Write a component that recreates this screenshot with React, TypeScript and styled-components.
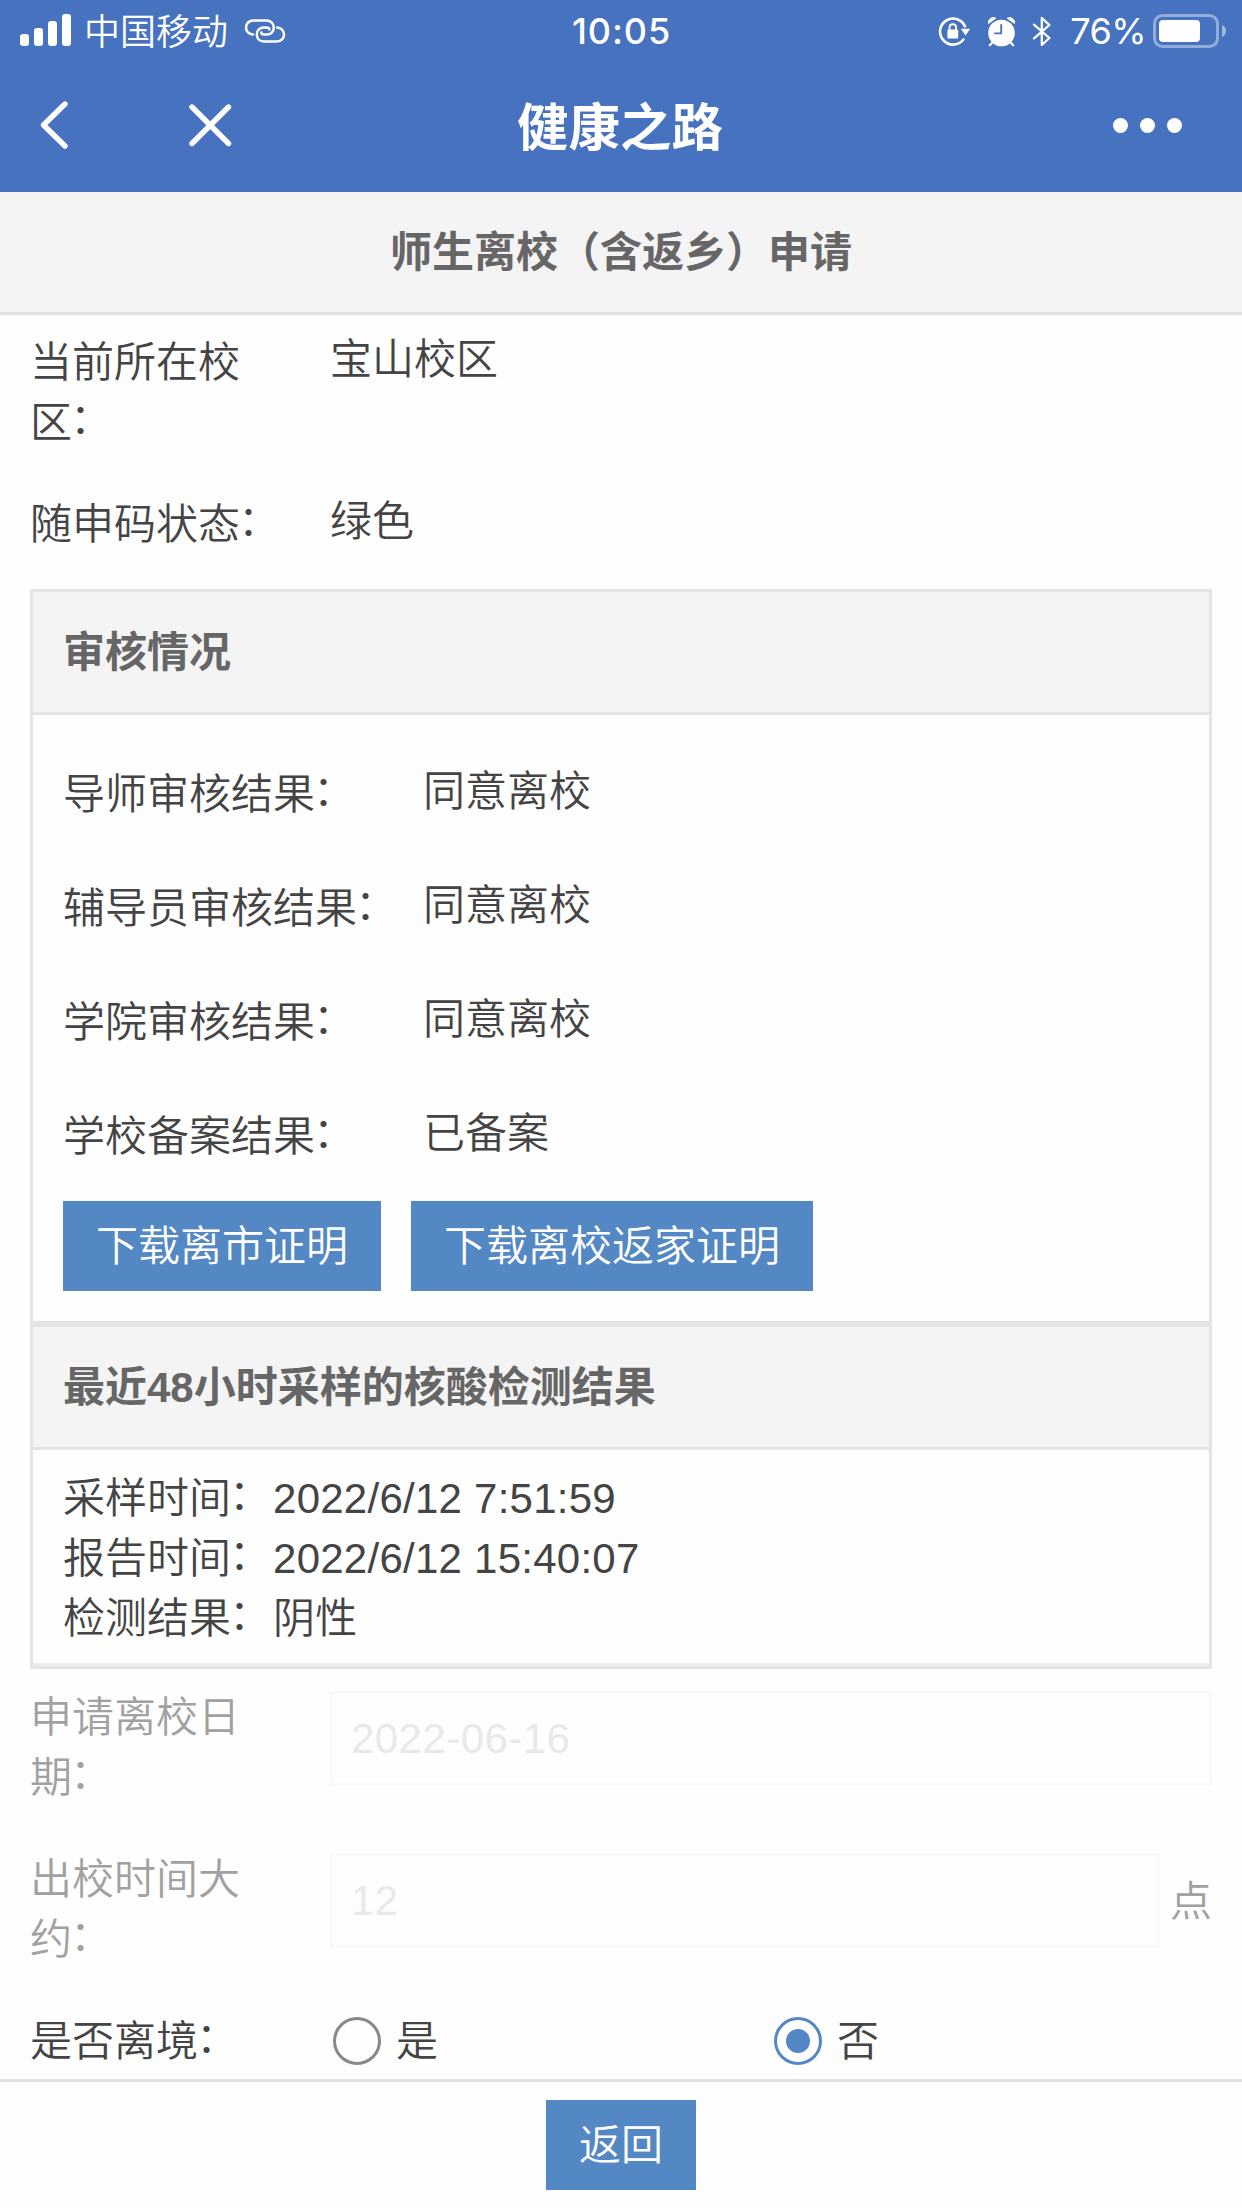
import React from "react";
import styled, { createGlobalStyle } from "styled-components";

const GlobalStyle = createGlobalStyle`
  *, *::before, *::after { box-sizing: border-box; }
  html, body { margin: 0; padding: 0; background: #fff; }
  body {
    font-family: "Liberation Sans", "Noto Sans CJK SC", sans-serif;
    font-size: 42px;
    font-weight: 350;
    line-height: 60px;
    color: #444;
  }
`;

const Screen = styled.div`
  display: flex;
  flex-direction: column;
  width: 1242px;
  height: 2208px;
  overflow: hidden;
  background: #fefefe;
`;

/* ---------- header ---------- */

const Header = styled.header`
  flex: none;
  height: 192px;
  background: #4672bf;
  color: #fff;
`;

const StatusBar = styled.div`
  display: grid;
  grid-template-columns: 1fr auto 1fr;
  align-items: center;
  height: 62px;
  padding: 0 15px 0 20px;
  font-family: Inter, "Noto Sans CJK SC", sans-serif;
  font-size: 36px;
  line-height: 62px;
`;

const StatusGroup = styled.div<{ $end?: boolean }>`
  display: flex;
  align-items: center;
  justify-content: ${(p) => (p.$end ? "flex-end" : "flex-start")};
`;

const Bars = styled.div`
  display: flex;
  align-items: flex-end;
  gap: 5px;
  height: 32px;
  margin: 0 13px 2px 0;
`;

const Bar = styled.span<{ $h: number }>`
  width: 9px;
  height: ${(p) => p.$h}px;
  border-radius: 3px;
  background: #fff;
`;

const Carrier = styled.span`
  margin: -4px 16px 0 0;
  font-family: "Noto Sans CJK SC", sans-serif;
  font-weight: 350;
`;

const Clock = styled.span`
  margin-right: 4px;
  font-weight: 500;
  letter-spacing: 0.9px;
`;

const Percent = styled.span`
  margin: 0 7px 0 18px;
  font-weight: 400;
  letter-spacing: -0.6px;
`;

const NavBar = styled.nav`
  display: grid;
  grid-template-columns: 1fr auto 1fr;
  align-items: center;
  height: 130px;
  padding: 0 60px 4px 36px;
`;

const NavLeft = styled.div`
  display: flex;
  align-items: center;
  gap: 114px;
`;

const NavTitle = styled.h1`
  margin: 5px 0 0 22px;
  font-size: 51.5px;
  line-height: 72px;
  font-weight: 700;
`;

const Dots = styled.div`
  display: flex;
  justify-content: flex-end;
  gap: 12px;
`;

const Dot = styled.span`
  width: 15px;
  height: 15px;
  border-radius: 50%;
  background: #fff;
`;

/* ---------- page ---------- */

const PageTitle = styled.h2`
  flex: none;
  height: 123px;
  margin: 0;
  padding-top: 1px;
  border-bottom: 3px solid #e1e1e1;
  background: #f4f4f4;
  color: #666;
  font-size: 42px;
  font-weight: 700;
  line-height: 120px;
  text-align: center;
`;

const Content = styled.main`
  flex: 1;
  min-height: 0;
  overflow: hidden;
  padding: 15px 30px 0;
`;

const Rows = styled.div<{ $gap: number }>`
  display: flex;
  flex-direction: column;
  gap: ${(p) => p.$gap}px;
`;

const Row = styled.div<{ $col: number }>`
  display: grid;
  grid-template-columns: ${(p) => p.$col}px 1fr;
`;

const LabelBox = styled.div<{ $muted?: boolean; $drop?: boolean }>`
  padding: ${(p) => (p.$drop ? "3px" : "0")} 20px 0 0;
  color: ${(p) => (p.$muted ? "#a1a1a1" : "#444")};
`;

const Colon = styled.span`
  margin: 0 2px 0 -2px;
  line-height: 0;
  vertical-align: 3px;
`;

const Value = styled.div``;

const Card = styled.section`
  margin: 34px 0 19px;
  border: 3px solid #e4e4e4;
`;

const CardTitle = styled.h3`
  height: 123px;
  margin: 0;
  padding: 1px 0 0 30px;
  border-bottom: 3px solid #e4e4e4;
  background: #f4f4f4;
  color: #666;
  font-size: 42px;
  font-weight: 700;
  line-height: 120px;
`;

const CardBody = styled.div`
  padding: 47px 30px 30px;
  border-bottom: 6px solid #e4e4e4;
`;

const Report = styled.div`
  padding: 19px 30px 14px;
  border-bottom: 3px solid #ececec;
`;

const Stamp = styled.span`
  letter-spacing: 0.25px;
`;

const Actions = styled.div`
  display: flex;
  gap: 30px;
  margin: 34px 0 0;
`;

const Button = styled.button`
  height: 90px;
  padding: 1px 33px 0;
  border: 0;
  background: #5488c5;
  color: #fff;
  font: inherit;
  line-height: 89px;
`;

const FieldLine = styled.div`
  display: flex;
  align-items: center;
  gap: 10px;
  height: 95px;
  margin-top: 3px;
`;

const Field = styled.div`
  flex: 1;
  height: 95px;
  padding-left: 18px;
  border: 3px solid #f9f9f9;
  color: #e9e9e9;
  line-height: 90px;
  letter-spacing: 0.45px;
`;

const Unit = styled.span`
  padding-top: 2px;
  color: #a1a1a1;
`;

const Choices = styled.div`
  display: grid;
  grid-template-columns: 1fr 1fr;
`;

const Choice = styled.div`
  display: flex;
  align-items: center;
  gap: 15px;
  padding-left: 3px;
`;

const Radio = styled.span<{ $on?: boolean }>`
  display: flex;
  align-items: center;
  justify-content: center;
  width: 48px;
  height: 48px;
  margin-top: -2px;
  border: 3px solid ${(p) => (p.$on ? "#5488c5" : "#888")};
  border-radius: 50%;

  &::after {
    content: "";
    width: 24px;
    height: 24px;
    border-radius: 50%;
    background: ${(p) => (p.$on ? "#5488c5" : "transparent")};
  }
`;

const Footer = styled.footer`
  flex: none;
  display: flex;
  justify-content: center;
  align-items: flex-start;
  height: 129px;
  padding-top: 18px;
  border-top: 3px solid #e2e2e2;
`;

/* ---------- icons ---------- */

const LinkIcon = () => (
  <svg width="42" height="26" viewBox="0 0 42 26" fill="none" stroke="#fff" strokeWidth="2.5" strokeLinecap="round">
    <path d="M9 16.6 C5 16.2 2 13.2 2 9.6 C2 5.4 5.2 2.6 9.2 2.6 H22.5 C27 2.6 29.8 5.8 29.8 9.6 C29.8 13.6 26.8 16.6 22.8 16.6 H20 C18.4 16.6 17.4 15.8 17.4 14.6" />
    <path d="M33 9.4 C37 9.8 40 12.6 40 16.4 C40 20.4 37 23.4 33 23.4 H20 C15.6 23.4 12.8 20.4 12.8 16.4 C12.8 12.4 15.8 9.4 19.6 9.4 H22.4 C24.2 9.4 25.4 10 25.4 11.4" />
  </svg>
);

const LockRotateIcon = () => (
  <svg width="33" height="31" viewBox="0 0 33 31" fill="none">
    <path d="M27.3 11.2 A13 13 0 1 0 26 22.6" stroke="#fff" strokeWidth="2.6" />
    <path d="M22.8 12.8 H32.2 L27.6 19.6 Z" fill="#fff" />
    <rect x="9.4" y="13.4" width="10.8" height="9.2" rx="1.2" fill="#fff" />
    <path d="M11.5 14 V11.4 C11.5 7.2 18.1 7.2 18.1 11.4 V14" stroke="#fff" strokeWidth="1.8" />
  </svg>
);

const AlarmIcon = () => (
  <svg width="29" height="31" viewBox="0 0 29 31" fill="none">
    <circle cx="14.5" cy="17" r="13.3" fill="#fff" />
    <path d="M1.6 7.4 C0.6 3.6 5 0.2 8.8 2.2 Z M27.4 7.4 C28.4 3.6 24 0.2 20.2 2.2 Z" fill="#fff" stroke="#fff" strokeLinejoin="round" />
    <path d="M5.8 26 L2.8 29.2 M23.2 26 L26.2 29.2" stroke="#fff" strokeWidth="2.2" strokeLinecap="round" />
    <path d="M14.2 9 V17.4 H8" stroke="#4672bf" strokeWidth="1.9" strokeLinecap="round" strokeLinejoin="round" />
  </svg>
);

const BluetoothIcon = () => (
  <svg width="20" height="31" viewBox="0 0 20 31" fill="none" stroke="#fff" strokeWidth="2.3" strokeLinecap="round" strokeLinejoin="round">
    <path d="M2 8.6 L17.4 22 L9.8 29 V2 L17.4 9 L2 22.4" />
  </svg>
);

const BatteryIcon = () => (
  <svg width="74" height="34" viewBox="0 0 74 34" fill="none">
    <rect x="1.5" y="1.5" width="63" height="31" rx="8" stroke="#fff" strokeOpacity="0.42" strokeWidth="3" />
    <rect x="6" y="6" width="41" height="22" rx="4" fill="#fff" />
    <path d="M69 11 C74.4 13 74.4 21 69 23 Z" fill="#fff" fillOpacity="0.5" />
  </svg>
);

const StatusIcons = styled.div`
  display: flex;
  align-items: center;
  gap: 16px;
`;

const BackIcon = () => (
  <svg width="39" height="52" viewBox="0 0 39 52" fill="none" stroke="#fff" strokeWidth="5.4" strokeLinecap="round" strokeLinejoin="round">
    <path d="M29 5 L7.5 26 L29 47" />
  </svg>
);

const CloseIcon = () => (
  <svg width="43" height="43" viewBox="0 0 43 43" fill="none" stroke="#fff" strokeWidth="5.4" strokeLinecap="round">
    <path d="M3 3 L39.5 39.5 M39.5 3 L3 39.5" />
  </svg>
);

type LabelProps = { text: string; muted?: boolean; drop?: boolean };

const Label = ({ text, muted, drop }: LabelProps) => (
  <LabelBox $muted={muted} $drop={drop}>
    {text}
    <Colon>：</Colon>
  </LabelBox>
);

const reviews = [
  ["导师审核结果", "同意离校"],
  ["辅导员审核结果", "同意离校"],
  ["学院审核结果", "同意离校"],
  ["学校备案结果", "已备案"],
];

const report = [
  ["采样时间", "2022/6/12 7:51:59"],
  ["报告时间", "2022/6/12 15:40:07"],
  ["检测结果", "阴性"],
];

export default function App() {
  return (
    <>
      <GlobalStyle />
      <Screen>
        <Header>
          <StatusBar>
            <StatusGroup>
              <Bars>
                {[12, 18, 25, 32].map((h) => (
                  <Bar key={h} $h={h} />
                ))}
              </Bars>
              <Carrier>中国移动</Carrier>
              <LinkIcon />
            </StatusGroup>
            <Clock>10:05</Clock>
            <StatusGroup $end>
              <StatusIcons>
                <LockRotateIcon />
                <AlarmIcon />
                <BluetoothIcon />
              </StatusIcons>
              <Percent>76%</Percent>
              <BatteryIcon />
            </StatusGroup>
          </StatusBar>
          <NavBar>
            <NavLeft>
              <BackIcon />
              <CloseIcon />
            </NavLeft>
            <NavTitle>健康之路</NavTitle>
            <Dots>
              <Dot />
              <Dot />
              <Dot />
            </Dots>
          </NavBar>
        </Header>

        <PageTitle>师生离校（含返乡）申请</PageTitle>

        <Content>
          <Rows $gap={39}>
            <Row $col={300}>
              <Label drop text="当前所在校区" />
              <Value>宝山校区</Value>
            </Row>
            <Row $col={300}>
              <Label drop text="随申码状态" />
              <Value>绿色</Value>
            </Row>
          </Rows>

          <Card>
            <CardTitle>审核情况</CardTitle>
            <CardBody>
              <Rows $gap={51}>
                {reviews.map(([label, value]) => (
                  <Row key={label} $col={360}>
                    <Label drop text={label} />
                    <Value>{value}</Value>
                  </Row>
                ))}
              </Rows>
              <Actions>
                <Button>下载离市证明</Button>
                <Button>下载离校返家证明</Button>
              </Actions>
            </CardBody>
            <CardTitle>最近48小时采样的核酸检测结果</CardTitle>
            <Report>
              {report.map(([label, value]) => (
                <div key={label}>
                  {label}
                  <Colon>：</Colon>
                  <Stamp>{value}</Stamp>
                </div>
              ))}
            </Report>
          </Card>

          <Rows $gap={42}>
            <Row $col={300}>
              <Label muted text="申请离校日期" />
              <FieldLine>
                <Field>2022-06-16</Field>
              </FieldLine>
            </Row>
            <Row $col={300}>
              <Label muted text="出校时间大约" />
              <FieldLine>
                <Field>12</Field>
                <Unit>点</Unit>
              </FieldLine>
            </Row>
            <Row $col={300}>
              <Label text="是否离境" />
              <Choices>
                <Choice>
                  <Radio />是
                </Choice>
                <Choice>
                  <Radio $on />否
                </Choice>
              </Choices>
            </Row>
          </Rows>
        </Content>

        <Footer>
          <Button>返回</Button>
        </Footer>
      </Screen>
    </>
  );
}
